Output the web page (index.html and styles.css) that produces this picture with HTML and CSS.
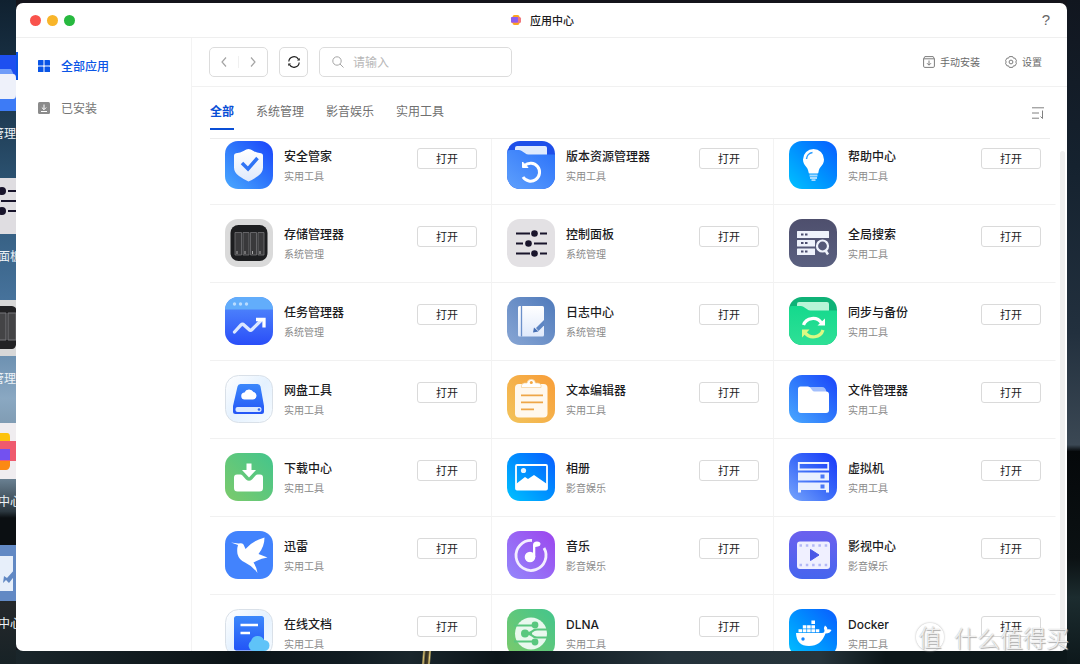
FILE: index.html
```
<!DOCTYPE html>
<html lang="zh-CN">
<head>
<meta charset="utf-8">
<title>应用中心</title>
<link rel="stylesheet" href="styles.css">
</head>
<body>
<svg class="defs" width="0" height="0" aria-hidden="true">
  <defs>
    <linearGradient id="g-blue" x1="0" y1="1" x2="1" y2="0"><stop offset="0" stop-color="#4aa9ff"/><stop offset=".5" stop-color="#2f78fb"/><stop offset="1" stop-color="#1a43fb"/></linearGradient>
    <linearGradient id="g-folder" x1="0" y1="1" x2="1" y2="0"><stop offset="0" stop-color="#5fa0fc"/><stop offset="1" stop-color="#2b72fa"/></linearGradient>
    <linearGradient id="g-cyan" x1="0" y1="1" x2="1" y2="0"><stop offset="0" stop-color="#00c2ff"/><stop offset=".5" stop-color="#0090ff"/><stop offset="1" stop-color="#0a5cff"/></linearGradient>
    <linearGradient id="g-task" x1="0" y1="0" x2="0" y2="1"><stop offset="0" stop-color="#5690fc"/><stop offset="1" stop-color="#2a4ef8"/></linearGradient>
    <linearGradient id="g-log" x1="0" y1="1" x2="1" y2="0"><stop offset="0" stop-color="#88a6d4"/><stop offset="1" stop-color="#4f7abb"/></linearGradient>
    <linearGradient id="g-slate" x1="0" y1="0" x2="0" y2="1"><stop offset="0" stop-color="#4e4f6d"/><stop offset="1" stop-color="#5a6080"/></linearGradient>
    <linearGradient id="g-mint" x1="0" y1="0" x2="0" y2="1"><stop offset="0" stop-color="#14d98d"/><stop offset="1" stop-color="#2fe096"/></linearGradient>
    <linearGradient id="g-pale" x1="0" y1="0" x2="1" y2="1"><stop offset="0" stop-color="#ffffff"/><stop offset=".5" stop-color="#e4f1fe"/><stop offset="1" stop-color="#f6fbff"/></linearGradient>
    <linearGradient id="g-orange" x1="0" y1="1" x2="1" y2="0"><stop offset="0" stop-color="#f2c45c"/><stop offset="1" stop-color="#f89d38"/></linearGradient>
    <linearGradient id="g-green" x1="0" y1="1" x2="1" y2="0"><stop offset="0" stop-color="#7cca6b"/><stop offset="1" stop-color="#43c58c"/></linearGradient>
    <linearGradient id="g-purple" x1="0" y1="1" x2="1" y2="0"><stop offset="0" stop-color="#9488fb"/><stop offset="1" stop-color="#9c45ee"/></linearGradient>
    <linearGradient id="g-vm" x1="0" y1="1" x2="1" y2="0"><stop offset="0" stop-color="#78a6fc"/><stop offset=".5" stop-color="#3b6bf8"/><stop offset="1" stop-color="#1737fa"/></linearGradient>
    <linearGradient id="g-video" x1="0" y1="0" x2="0" y2="1"><stop offset="0" stop-color="#6b60ee"/><stop offset="1" stop-color="#4665ee"/></linearGradient>
    <linearGradient id="g-white" x1="0" y1="0" x2="0" y2="1"><stop offset="0" stop-color="#ffffff"/><stop offset="1" stop-color="#dfe9fb"/></linearGradient>
    <linearGradient id="g-doc" x1="0" y1="0" x2="0" y2="1"><stop offset="0" stop-color="#3c88fb"/><stop offset="1" stop-color="#2355f6"/></linearGradient>
    <clipPath id="tile"><rect width="48" height="48" rx="13"/></clipPath>
  </defs>
</svg>

<div class="desktop" aria-hidden="true">
  <div class="shortcut s1">
    <svg width="16" height="56"><rect width="16" height="56" fill="#1d4ff0"/><path d="M0 14h11l3 6v22H0z" fill="#6f9cf8"/><path d="M0 40h16v16H0z" fill="#3d7bf6"/><path d="M0 19h13q3 0 3 4v17q0 4-3 4H0z" fill="#eef1fa"/></svg>
    <span class="label wide">管理</span>
  </div>
  <div class="shortcut s2">
    <svg width="16" height="56"><rect width="16" height="56" fill="#dfdde1"/><path d="M8 13h8M1 23h15M8 33h8" stroke="#17132a" stroke-width="2"/><circle cx="2" cy="13" r="4" fill="#17132a"/><circle cx="2" cy="33" r="4" fill="#17132a"/></svg>
    <span class="label">面板</span>
  </div>
  <div class="shortcut s3">
    <svg width="16" height="56"><rect width="16" height="56" fill="#d8d8d8"/><path d="M0 6h12q4 1 4 3v36q-1 4-4 4H0z" fill="#222224"/><path d="M0 13h6v27H0M8 13h8v27H8z" fill="#444446" stroke="#77777a"/></svg>
    <span class="label wide">管理</span>
  </div>
  <div class="shortcut s4">
    <svg width="16" height="56"><rect width="16" height="56" fill="#f0edf0"/><path d="M0 10h7q3 0 3 4v6H0z" fill="#fdc20d"/><path d="M0 36h10v7q-1 4-4 4H0z" fill="#fb8913"/><path d="M0 18h16v20H0z" fill="#ef5a6e"/><path d="M0 26h10v11H0z" fill="#7351f0"/></svg>
    <span class="label">中心</span>
  </div>
  <div class="shortcut s5">
    <svg width="16" height="56"><rect width="16" height="56" fill="#6289c4"/><path d="M0 11h13v35H0z" fill="#e7effa"/><path d="M3 38l3-3 3 3 7-9v-6L7 33l-3-2z" fill="#6289c4"/></svg>
    <span class="label">中心</span>
  </div>
</div>

<div class="window">
  <header class="titlebar">
    <div class="lights"><button class="light red" aria-label="关闭"></button><button class="light yellow" aria-label="最小化"></button><button class="light green" aria-label="最大化"></button></div>
    <h1 class="title">
      <svg width="12" height="12" viewBox="0 0 12 12" aria-hidden="true"><rect x="2.500" y="1" width="7" height="10" rx="2" fill="#fca41f"/><rect x="1" y="3" width="10" height="6" rx="1.500" fill="#f0787c"/><rect x="1" y="3" width="7" height="5.500" rx="1" fill="#8a5cf0"/></svg>
      应用中心
    </h1>
    <button class="help" aria-label="帮助">?</button>
  </header>

  <div class="body">
    <nav class="sidebar">
      <a class="side-item active" href="#all"><svg width="12" height="12" viewBox="0 0 12 12" fill="currentColor" aria-hidden="true"><rect width="5.500" height="5.500" rx=".6"/><rect x="6.500" width="5.500" height="5.500" rx=".6"/><rect y="6.500" width="5.500" height="5.500" rx=".6"/><rect x="6.500" y="6.500" width="5.500" height="5.500" rx=".6"/></svg>全部应用</a>
      <a class="side-item" href="#installed"><svg width="12" height="12" viewBox="0 0 12 12" aria-hidden="true"><rect width="12" height="12" rx="1.500" fill="#8b8b8b"/><path d="M6 2.500v5M3.800 5.500L6 7.700l2.200-2.200M3 9.500h6" fill="none" stroke="#fff"/></svg>已安装</a>
    </nav>

    <main class="main">
      <div class="toolbar">
        <div class="history">
          <button aria-label="后退"><svg width="10" height="12" viewBox="0 0 10 12" aria-hidden="true"><path d="M7 1.500L3 6l4 4.500"/></svg></button>
          <button aria-label="前进"><svg width="10" height="12" viewBox="0 0 10 12" aria-hidden="true"><path d="M3 1.500L7 6l-4 4.500"/></svg></button>
        </div>
        <button class="refresh" aria-label="刷新"><svg width="14" height="14" viewBox="0 0 14 14" aria-hidden="true"><path d="M1.800 6.500A5.200 5.200 0 0 1 11.500 4.400M12.200 7.500A5.200 5.200 0 0 1 2.500 9.600" fill="none" stroke="#222" stroke-width="1.200"/><path d="M10 5.600h2.800V3zM4 8.400H1.200V11z" fill="#222"/></svg></button>
        <label class="search">
          <svg width="12" height="12" viewBox="0 0 12 12" aria-hidden="true"><circle cx="5" cy="5" r="4.200"/><path d="M8 8l3.500 3.500"/></svg>
          <input type="text" placeholder="请输入" aria-label="搜索">
        </label>
        <div class="actions">
          <button><svg width="12" height="12" viewBox="0 0 12 12" aria-hidden="true"><path d="M1.800.6h8.400l1.200 2.200v7.400q0 1.200-1.200 1.200H1.800Q.6 11.400.6 10.200V2.800zM.6 2.800h10.800M6 4.500v4.500M4 7.200l2 2 2-2"/></svg>手动安装</button>
          <button><svg width="12" height="12" viewBox="0 0 12 12" aria-hidden="true"><path d="M4.300.6h3.400l.7 1.500 1.700.1 1.400 2.600L10.700 6l.8 1.200-1.400 2.600-1.700.1-.7 1.500H4.300l-.7-1.500-1.700-.1L.5 7.200 1.300 6 .5 4.800l1.400-2.600 1.700-.1z"/><circle cx="6" cy="6" r="1.900"/></svg>设置</button>
        </div>
      </div>

      <div class="tabs">
        <a class="tab active" href="#t0">全部</a>
        <a class="tab" href="#t1">系统管理</a>
        <a class="tab" href="#t2">影音娱乐</a>
        <a class="tab" href="#t3">实用工具</a>
        <button class="sort" aria-label="排序"><svg width="12" height="12" viewBox="0 0 12 12" aria-hidden="true"><path d="M0 .8h12M0 6h7M0 11.200h7M10.500 3.500v8l-2-2"/></svg></button>
      </div>

      <div class="list">
        <div class="grid">
          <article class="app">
            <svg class="icon" viewBox="0 0 48 48" aria-hidden="true"><rect width="48" height="48" rx="13" fill="url(#g-blue)"/><path d="M23.500 8q2 0 5 2t7.500 2.200q2 .3 2 2.300v12q0 5-5 8.500-4 3-9.500 5.500-5.500-2.500-9.500-5.500-5-3.500-5-8.500v-12q0-2 2-2.300Q15.500 12 18.500 10t5-2z" fill="url(#g-white)"/><path d="M17 22l6 6L32.500 17" fill="none" stroke="#2f74f5" stroke-width="3.500"/></svg>
            <div class="info"><h2>安全管家</h2><p>实用工具</p></div><button class="open">打开</button>
          </article>
          <article class="app">
            <svg class="icon" viewBox="0 0 48 48" aria-hidden="true"><g clip-path="url(#tile)"><rect width="48" height="48" fill="#1e4fe9"/><path d="M8 14V7q0-2 2-2h28q2 0 2 2v9H8z" fill="#dfeafd"/><path d="M0 12q0-3 3-3h9q2 0 3.500 1.500l3 2q1 1 3 1H48V48H0z" fill="url(#g-folder)"/></g><path d="M17.500 24.500A9 9 0 1 1 16 36" fill="none" stroke="#fff" stroke-width="3"/><path d="M15.500 21v5.500H21z" fill="#fff" stroke="#fff" stroke-linejoin="round"/></svg>
            <div class="info"><h2>版本资源管理器</h2><p>实用工具</p></div><button class="open">打开</button>
          </article>
          <article class="app">
            <svg class="icon" viewBox="0 0 48 48" aria-hidden="true"><rect width="48" height="48" rx="13" fill="url(#g-cyan)"/><path d="M24.500 8A10.500 10.500 0 0 1 35 18.500c0 6-5 7-5.500 12.500q0 1.500-1.300 1.500h-7.400q-1.300 0-1.300-1.500C19 25.500 14 24.500 14 18.500A10.500 10.500 0 0 1 24.500 8z" fill="#fff"/><path d="M17.500 18a7 7 0 0 1 6-6.500" fill="none" stroke="#2a9cff" stroke-width="1.500"/><path d="M20.500 34.500h8M21 37h7M22.500 39.200h4" stroke="#a9dcff" stroke-width="1.800"/></svg>
            <div class="info"><h2>帮助中心</h2><p>实用工具</p></div><button class="open">打开</button>
          </article>

          <article class="app">
            <svg class="icon" viewBox="0 0 48 48" aria-hidden="true"><rect width="48" height="48" rx="13" fill="#dadada"/><rect x="5.500" y="6" width="37" height="36" rx="8" fill="#1d1e20"/><g fill="#39393b" stroke="#747476" stroke-width=".8"><path d="M10 13.500h6.500V36H10zM18 13.500h6V36h-6zM25.500 13.500h6V36h-6zM33 13.500h6V36h-6z"/></g><path d="M12 32v3M20 32v3M27.500 32v3M35 32v3" stroke="#aaa"/></svg>
            <div class="info"><h2>存储管理器</h2><p>系统管理</p></div><button class="open">打开</button>
          </article>
          <article class="app">
            <svg class="icon" viewBox="0 0 48 48" aria-hidden="true"><rect width="48" height="48" rx="13" fill="#e3e1e4"/><path d="M9 14.500h14M33 14.500h7M9 24.500h7M27 24.500h13M9 34.500h14M33 34.500h7" stroke="#19142b" stroke-width="2"/><g fill="#19142b"><circle cx="27.500" cy="14.500" r="3.300"/><circle cx="21.500" cy="24.500" r="3.300"/><circle cx="27.500" cy="34.500" r="3.300"/></g></svg>
            <div class="info"><h2>控制面板</h2><p>系统管理</p></div><button class="open">打开</button>
          </article>
          <article class="app">
            <svg class="icon" viewBox="0 0 48 48" aria-hidden="true"><rect width="48" height="48" rx="13" fill="url(#g-slate)"/><g fill="#eef2fb"><rect x="8" y="12" width="32" height="7" rx=".5"/><rect x="8" y="21" width="18" height="6.500" rx=".5"/><rect x="8" y="29.500" width="18" height="6.500" rx=".5"/></g><path d="M12 14.500h2.500v2H12zM16 14.500h2.500v2H16zM12 23h2.500v2H12zM16 23h2.500v2H16zM12 31.500h2.500v2H12zM16 31.500h2.500v2H16z" fill="#4b4d6e"/><circle cx="33.500" cy="27" r="5.500" fill="none" stroke="#eef2fb" stroke-width="2.200"/><path d="M36.500 31.500l2.500 4" stroke="#eef2fb" stroke-width="2.500"/></svg>
            <div class="info"><h2>全局搜索</h2><p>实用工具</p></div><button class="open">打开</button>
          </article>

          <article class="app">
            <svg class="icon" viewBox="0 0 48 48" aria-hidden="true"><g clip-path="url(#tile)"><rect width="48" height="48" fill="url(#g-task)"/><rect width="48" height="12.500" fill="#62adfb"/></g><g fill="#b9dcff"><circle cx="9.500" cy="7" r="1.700"/><circle cx="15.500" cy="7" r="1.700"/><circle cx="21.500" cy="7" r="1.700"/></g><path d="M9.500 35l6.500-7q1.500-1.500 3 0l5 4.500q1.500 1.500 3 0l9-9" fill="none" stroke="#dbe7ff" stroke-width="3.300" stroke-linecap="round"/><path d="M31 22.500h8v8" fill="none" stroke="#fff" stroke-width="3.300"/></svg>
            <div class="info"><h2>任务管理器</h2><p>系统管理</p></div><button class="open">打开</button>
          </article>
          <article class="app">
            <svg class="icon" viewBox="0 0 48 48" aria-hidden="true"><rect width="48" height="48" rx="13" fill="url(#g-log)"/><rect x="11" y="9" width="26" height="30.500" rx="1.500" fill="url(#g-white)"/><path d="M14.500 9v30.500" stroke="#6b90ca" stroke-width="1.300"/><path d="M29 31l8-8v5.500L31.500 34z" fill="#5d85c3"/><path d="M26 35.500l1-5 4.500 4z" fill="#466fb4"/></svg>
            <div class="info"><h2>日志中心</h2><p>系统管理</p></div><button class="open">打开</button>
          </article>
          <article class="app">
            <svg class="icon" viewBox="0 0 48 48" aria-hidden="true"><g clip-path="url(#tile)"><rect width="48" height="48" fill="#0fb277"/><path d="M8 14V7q0-2 2-2h28q2 0 2 2v9H8z" fill="#b8f5d8"/><path d="M0 12q0-3 3-3h9q2 0 3.500 1.500l3 2q1 1 3 1H48V48H0z" fill="url(#g-mint)"/></g><path d="M14.500 28a10 9.500 0 0 1 18-2" fill="none" stroke="#fff" stroke-width="3.200"/><path d="M36 21.500v7h-7.500z" fill="#fff"/><path d="M34 33a10 9.500 0 0 1-18 2.500" fill="none" stroke="#dcf983" stroke-width="3.200"/><path d="M13 40.500v-8h7.500z" fill="#dcf983"/></svg>
            <div class="info"><h2>同步与备份</h2><p>实用工具</p></div><button class="open">打开</button>
          </article>

          <article class="app">
            <svg class="icon" viewBox="0 0 48 48" aria-hidden="true"><rect x=".5" y=".5" width="47" height="47" rx="13" fill="url(#g-pale)" stroke="#d9e0e8"/><path d="M15.500 9h17q2.500 0 3 2.500L39 31v5.500q0 2.500-2.500 2.500h-26Q8 39 8 36.500V31l4.500-19.500Q13 9 15.500 9z" fill="url(#g-doc)"/><rect x="10.500" y="32" width="26" height="5" rx="2" fill="#dbe9ff"/><circle cx="34" cy="34.500" r="1.300" fill="#2f68f0"/><path d="M20 24.500a3.500 3.500 0 0 1-.5-7 5 5 0 0 1 9-.5 3.800 3.800 0 0 1-.5 7.500z" fill="#fff"/></svg>
            <div class="info"><h2>网盘工具</h2><p>实用工具</p></div><button class="open">打开</button>
          </article>
          <article class="app">
            <svg class="icon" viewBox="0 0 48 48" aria-hidden="true"><rect width="48" height="48" rx="13" fill="url(#g-orange)"/><rect x="8" y="9" width="32.500" height="33.500" rx="4" fill="#fff8ee"/><path d="M14.500 12.500v-2q0-2 3-2.500h2.500a4.300 4.300 0 0 1 8.500 0H31q3 .5 3 2.500v2z" fill="#fff" stroke="#f5cf94" stroke-width=".7"/><circle cx="24.300" cy="7.500" r="1.500" fill="#f4a945"/><path d="M14 20.300h22M14 27.300h22M14 34.300h13" stroke="#eea648" stroke-width="1.800"/></svg>
            <div class="info"><h2>文本编辑器</h2><p>实用工具</p></div><button class="open">打开</button>
          </article>
          <article class="app">
            <svg class="icon" viewBox="0 0 48 48" aria-hidden="true"><rect width="48" height="48" rx="13" fill="url(#g-blue)"/><path d="M20 12h13q3.500 0 4.500 5H20z" fill="#a3bffc"/><path d="M9 14q0-2.500 2.500-2.500H19q1.500 0 2.500 1.500l1.500 2q1 1.500 2.500 1.500H37q3 0 3 3V35q0 3-3 3H12q-3 0-3-3z" fill="#fff"/></svg>
            <div class="info"><h2>文件管理器</h2><p>实用工具</p></div><button class="open">打开</button>
          </article>

          <article class="app">
            <svg class="icon" viewBox="0 0 48 48" aria-hidden="true"><rect width="48" height="48" rx="13" fill="url(#g-green)"/><path d="M12 21.500h3.500q1 0 1.700.8l3.800 4.200q3 2.500 6 0l3.800-4.200q.7-.8 1.700-.8H35q3 0 3 3V35q0 3.500-3.500 3.500h-22Q9 38.500 9 35V24.500q0-3 3-3z" fill="#fff"/><path d="M21.500 10.500h5V17h4.500l-7 7.500-7-7.500h4.500z" fill="#fff"/></svg>
            <div class="info"><h2>下载中心</h2><p>实用工具</p></div><button class="open">打开</button>
          </article>
          <article class="app">
            <svg class="icon" viewBox="0 0 48 48" aria-hidden="true"><rect width="48" height="48" rx="13" fill="url(#g-cyan)"/><rect x="9" y="12" width="31" height="24.500" rx="1" fill="none" stroke="#fff" stroke-width="1.800"/><circle cx="16.500" cy="17.500" r="2.600" fill="#e7f5ff"/><path d="M9 31l9-7 3 2 6-4 13 9v5.500H9z" fill="#fff"/></svg>
            <div class="info"><h2>相册</h2><p>影音娱乐</p></div><button class="open">打开</button>
          </article>
          <article class="app">
            <svg class="icon" viewBox="0 0 48 48" aria-hidden="true"><rect width="48" height="48" rx="13" fill="url(#g-vm)"/><path d="M9.800 10h29.400v6.500H9.800z" fill="none" stroke="#eef3ff" stroke-width="1.800"/><path d="M9 19.500h31v8H9zM9 29.500h31v10h-3V37H12v2.500H9z" fill="#e9f0ff"/><path d="M31.500 21.500h4v4h-4zM31.500 31.500h4v4h-4z" fill="#4b78f6"/></svg>
            <div class="info"><h2>虚拟机</h2><p>实用工具</p></div><button class="open">打开</button>
          </article>

          <article class="app">
            <svg class="icon" viewBox="0 0 48 48" aria-hidden="true"><rect width="48" height="48" rx="13" fill="#4283fd"/><path d="M6 11.500l7.500 1q3.500-1 5 1L20.500 18Q27 10 39.500 6.500q0 9-6 16.500l9 3.500q-6 .5-11 3.500l-3 1.500q3 4.500 4 10.500-5-7-12.500-10.500-6-2.500-7.500-8.500-.8-5 .5-9z" fill="#fff"/></svg>
            <div class="info"><h2>迅雷</h2><p>实用工具</p></div><button class="open">打开</button>
          </article>
          <article class="app">
            <svg class="icon" viewBox="0 0 48 48" aria-hidden="true"><rect width="48" height="48" rx="13" fill="url(#g-purple)"/><path d="M25 9.500A15 15 0 1 0 37 17" fill="none" stroke="#f3eeff" stroke-width="2.800"/><circle cx="23" cy="26" r="5.300" fill="#fff"/><path d="M26 26V14q0-3.500 4-3.500 3.500 0 3.500 2.500 0 2-2.500 2.500l-2.700.5v10z" fill="#fff"/></svg>
            <div class="info"><h2>音乐</h2><p>影音娱乐</p></div><button class="open">打开</button>
          </article>
          <article class="app">
            <svg class="icon" viewBox="0 0 48 48" aria-hidden="true"><rect width="48" height="48" rx="13" fill="url(#g-video)"/><rect x="8" y="10.500" width="33" height="27.500" rx="3" fill="#f0f0ff"/><path d="M10.500 14.500h28M10.500 34h28" stroke="#b4b9f6" stroke-width="2.500" stroke-dasharray="2.500 3.800"/><path d="M21.500 18.500l8.500 5.500-8.500 5.500z" fill="#4a58e6" stroke="#4a58e6" stroke-linejoin="round"/></svg>
            <div class="info"><h2>影视中心</h2><p>影音娱乐</p></div><button class="open">打开</button>
          </article>

          <article class="app">
            <svg class="icon" viewBox="0 0 48 48" aria-hidden="true"><rect x=".5" y=".5" width="47" height="47" rx="13" fill="url(#g-pale)" stroke="#d9e0e8"/><rect x="9" y="7" width="30" height="34.500" rx="2.500" fill="url(#g-doc)"/><path d="M15.500 16h17.500M15.500 24h9.500" stroke="#fff" stroke-width="2.500"/><path d="M29 42a5.500 5.500 0 0 1-3-10 7 7 0 0 1 13-1 5.500 5.500 0 0 1 0 11z" fill="#5fc3f8"/></svg>
            <div class="info"><h2>在线文档</h2><p>实用工具</p></div><button class="open">打开</button>
          </article>
          <article class="app">
            <svg class="icon" viewBox="0 0 48 48" aria-hidden="true"><rect width="48" height="48" rx="13" fill="url(#g-green)"/><circle cx="24" cy="24.500" r="16" fill="#e9f8ee"/><path d="M7 16.500h21M7 32.500h21M18 24.500h7" fill="none" stroke="#5ac77f" stroke-width="1.800"/><path d="M18 24.500q5 0 7-2t5-2h11M18 24.500q5 0 7 2t5 2h11" fill="none" stroke="#5ac77f" stroke-width="2.200"/><g fill="#5ac77f"><circle cx="28" cy="16" r="3.400"/><circle cx="18" cy="24.500" r="4"/><circle cx="28" cy="33" r="3.400"/></g></svg>
            <div class="info"><h2>DLNA</h2><p>实用工具</p></div><button class="open">打开</button>
          </article>
          <article class="app">
            <svg class="icon" viewBox="0 0 48 48" aria-hidden="true"><rect width="48" height="48" rx="13" fill="url(#g-cyan)"/><path d="M7 24h26q2.500 0 2.500-2.500-1.500-2.500.5-5 2.500 1.500 2.500 4 2-.5 4 .5-1.500 3.500-6 3.500Q32 37 20 37 7.500 37 7 24z" fill="#fff"/><path d="M9.500 20.300h3.600v3H9.500zM13.800 20.300h3.600v3h-3.600zM18.100 20.300h3.600v3h-3.600zM22.400 20.300H26v3h-3.600zM26.700 20.300h3.600v3h-3.600zM13.800 16.200h3.600v3.400h-3.600zM18.100 16.200h3.600v3.400h-3.600zM22.400 16.200H26v3.400h-3.600zM22.400 11.500H26V15h-3.600z" fill="#fff"/><circle cx="14" cy="30" r="1.700" fill="#1385ff"/></svg>
            <div class="info"><h2>Docker</h2><p>实用工具</p></div><button class="open">打开</button>
          </article>
        </div>
        <div class="scrollbar"></div>
      </div>
    </main>
  </div>
</div>

<div class="watermark"><span class="seal">值</span><span>什么值得买</span></div>
</body>
</html>
```
FILE: styles.css
```
* {
  box-sizing: border-box;
}

body {
  margin: 0;
  height: 100vh;
  padding: 3px 13px 13px 16px;
  overflow: hidden;
  font-family: "Noto Sans CJK SC", sans-serif;
  font-size: 12px;
  line-height: 16px;
  color: #1c1c1e;
  background:
    linear-gradient(180deg, #102130 0%, #1c374d 15%, #2f5879 30%, #46729b 45%, #8aa8c2 60%, #6b8294 72%, #2c3840 77%, #0b0f12 78%, #0b0f12 83%, #25282b 91%, #172226 100%) left / 16px 100% no-repeat,
    linear-gradient(180deg, #11161f 0%, #15222f 25%, #22303e 50%, #3b4854 67%, #05080a 68%, #0b1113 84%, #1c2c2f 90%, #0d181b 100%) right / 13px 100% no-repeat,
    linear-gradient(95deg, transparent 30%, #d8c070 36%, #2b2a24 44%, #4a4028 54%, #e8cf7a 60%, transparent 66%) 415px bottom / 24px 13px no-repeat,
    linear-gradient(90deg, #1b272c 0%, #0b1317 22%, #111c22 32%, #1a262c 38%, #0c151a 46%, #24323a 62%, #26343b 76%, #0c1619 82%, #0c171a 100%) bottom / 100% 14px no-repeat,
    #14141b;
}

button {
  font: inherit;
  color: inherit;
  background: none;
  border: 0;
  padding: 0;
}

a {
  color: inherit;
  text-decoration: none;
}

svg {
  display: block;
  flex: none;
}

h1, h2, p {
  margin: 0;
}

.defs {
  position: absolute;
}

/* Desktop shortcuts peeking out from behind the window */
.desktop {
  position: absolute;
  left: 0;
  top: 0;
  width: 17px;
  height: 100%;
  overflow: hidden;
}

.shortcut {
  position: absolute;
  left: 0;
}

.s1 { top: 55px; }
.s2 { top: 178px; }
.s3 { top: 300px; }
.s4 { top: 423px; }
.s5 { top: 545px; }

.label {
  display: block;
  margin: 14px 0 0 -2px;
  white-space: nowrap;
  color: #eef3f7;
}

.label.wide {
  margin-left: -8px;
}

.window {
  position: relative;
  display: flex;
  flex-direction: column;
  height: 100%;
  overflow: hidden;
  border-radius: 7px;
  background: #fff;
}

.titlebar {
  display: grid;
  grid-template-columns: 1fr auto 1fr;
  align-items: center;
  height: 35px;
  flex: none;
  padding: 0 17px 0 14px;
  border-bottom: 1px solid #efefef;
}

.lights {
  display: flex;
  gap: 6px;
}

.light {
  width: 11px;
  height: 11px;
  border-radius: 50%;
}

.red { background: #f9534c; }
.yellow { background: #f8b52a; }
.green { background: #27b93f; }

.title {
  display: flex;
  align-items: center;
  gap: 8px;
  padding-left: 4px;
  font-size: 11px;
  font-weight: 500;
  line-height: 14px;
}

.help {
  justify-self: end;
  font-family: "Liberation Sans", sans-serif;
  font-size: 15px;
  color: #666;
}

.body {
  display: flex;
  flex: 1;
  min-height: 0;
}

.sidebar {
  display: flex;
  flex-direction: column;
  gap: 14px;
  width: 176px;
  flex: none;
  padding-top: 14px;
  border-right: 1px solid #f3f3f3;
}

.side-item {
  display: flex;
  align-items: center;
  gap: 11px;
  height: 28px;
  padding-left: 20px;
  border-left: 2px solid transparent;
  color: #757575;
}

.side-item.active {
  border-color: #0a55e6;
  color: #0a55e6;
  font-weight: 500;
}

.main {
  display: flex;
  flex-direction: column;
  flex: 1;
  min-width: 0;
}

.toolbar {
  display: flex;
  align-items: center;
  gap: 11px;
  height: 49px;
  flex: none;
  padding: 0 25px 0 17px;
  border-bottom: 1px solid #f1f1f1;
}

.history,
.refresh,
.search {
  display: flex;
  align-items: center;
  height: 30px;
  border: 1px solid #dcdcdc;
  border-radius: 5px;
}

.history {
  width: 59px;
}

.history button {
  display: flex;
  justify-content: center;
  flex: 1;
}

.history button + button {
  border-left: 1px solid #f0f0f0;
}

.history svg {
  fill: none;
  stroke: #a5a5a5;
  stroke-width: 1.2;
}

.refresh {
  justify-content: center;
  width: 29px;
}

.search {
  gap: 9px;
  width: 193px;
  padding: 0 12px;
}

.search svg {
  fill: none;
  stroke: #a5a5a5;
}

.search input {
  flex: 1;
  min-width: 0;
  padding: 0;
  border: 0;
  outline: 0;
  background: none;
  font: inherit;
}

.search input::placeholder {
  color: #b8b8b8;
}

.actions {
  display: flex;
  gap: 25px;
  margin-left: auto;
  font-size: 10px;
  color: #6a6a6a;
}

.actions button {
  display: flex;
  align-items: center;
  gap: 5px;
}

.actions svg {
  fill: none;
  stroke: #7d7d7d;
}

.tabs {
  display: flex;
  gap: 22px;
  height: 52px;
  flex: none;
  margin: 0 17px 0 18px;
  padding-right: 6px;
  border-bottom: 1px solid #ececec;
  color: #707070;
}

.tab {
  height: 43px;
  padding-top: 16px;
}

.tab.active {
  color: #0a4fd6;
  font-weight: 700;
  border-bottom: 2px solid #0a4fd6;
}

.sort {
  align-self: center;
  margin-left: auto;
}

.sort svg {
  fill: none;
  stroke: #808080;
}

.list {
  position: relative;
  flex: 1;
  min-height: 0;
  overflow: hidden;
  padding: 0 11px 0 18px;
}

/* The list is shown scrolled down by a few pixels */
.grid {
  display: grid;
  grid-template-columns: repeat(3, 1fr);
  margin-top: -12px;
}

.app {
  display: flex;
  align-items: flex-start;
  height: 78px;
  padding: 14px 14px 0 15px;
  border-right: 1px solid #f3f3f3;
  border-bottom: 1px solid #f1f1f1;
}

.app:nth-child(3n) {
  border-right-color: transparent;
}

.icon {
  width: 48px;
  height: 48px;
}

.info {
  flex: 1;
  min-width: 0;
  padding: 8px 0 0 11px;
}

.info h2 {
  font-family: Inter, "Noto Sans CJK SC", sans-serif;
  font-size: 12px;
  font-weight: 500;
  line-height: 16px;
}

.info p {
  margin-top: 3px;
  font-size: 10px;
  line-height: 16px;
  color: #8a8a8a;
}

.open {
  width: 60px;
  height: 21px;
  margin-top: 7px;
  padding-bottom: 2px;
  border: 1px solid #dadada;
  border-radius: 3px;
  font-size: 11px;
  line-height: 16px;
}

.scrollbar {
  position: absolute;
  top: 12px;
  right: 2px;
  bottom: 0;
  width: 5px;
  border-radius: 3px 3px 0 0;
  background: #efefef;
}

.watermark {
  position: absolute;
  right: 11px;
  bottom: 13px;
  display: flex;
  align-items: center;
  gap: 10px;
  font-size: 23px;
  font-weight: 300;
  line-height: 28px;
  color: rgba(255, 255, 255, .8);
  text-shadow: 0 0 1px #aaa, 1px 1px 1px #aaa;
}

.seal {
  width: 28px;
  height: 28px;
  border: 1px solid #fff;
  border-radius: 50%;
  box-shadow: 0 0 2px #aaa;
  line-height: 24px;
  text-align: center;
}
```
